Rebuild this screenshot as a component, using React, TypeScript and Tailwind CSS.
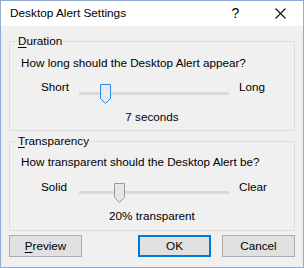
import type { ReactNode } from "react";

const font = { fontFamily: '"Liberation Sans", Arial, sans-serif' };

function Thumb({ focused }: { focused?: boolean }) {
  return (
    <svg width="11" height="20" viewBox="0 0 11 20" className="absolute top-0">
      <path
        d="M0.5 0.5H10.5V14.5L5.5 19.5L0.5 14.5Z"
        fill={focused ? "#eaeaea" : "#e6e6e6"}
        stroke={focused ? "#2a8ae8" : "#9a9a9a"}
      />
    </svg>
  );
}

function SliderRow({
  left,
  right,
  pos,
  focused,
  thumbTop,
}: {
  left: string;
  right: string;
  pos: number;
  focused?: boolean;
  thumbTop: string;
}) {
  return (
    <div className="flex items-start pl-[31px]">
      <span className="w-[38px] leading-[16px]">{left}</span>
      <div className={`relative w-[150px] h-[20px] ${thumbTop}`}>
        <div className="absolute left-0 right-0 top-[8px] h-[3px] bg-[#d9d9d9]" />
        <div className="absolute top-0" style={{ left: pos }}>
          <Thumb focused={focused} />
        </div>
      </div>
      <span className="ml-[10px] leading-[16px]">{right}</span>
    </div>
  );
}

function Group({
  mnemonic,
  rest,
  className,
  children,
}: {
  mnemonic: string;
  rest: string;
  className: string;
  children: ReactNode;
}) {
  return (
    <fieldset className={`border border-[#dcdcdc] mx-[8px] p-0 ${className}`}>
      <legend className="ml-[7px] px-[1px] leading-[16px]">
        <span className="underline underline-offset-2">{mnemonic}</span>
        {rest}
      </legend>
      {children}
    </fieldset>
  );
}

function Button({
  children,
  primary,
}: {
  children: ReactNode;
  primary?: boolean;
}) {
  return (
    <button
      className={`w-[73px] h-[22px] bg-[#e1e1e1] leading-[16px] ${
        primary ? "border-2 border-[#0078d7]" : "border border-[#adadad]"
      }`}
    >
      {children}
    </button>
  );
}

export default function App() {
  return (
    <div
      className="w-[304px] h-[268px] border border-[#92abd4] bg-[#f0f0f0] flex flex-col text-[11.7px] text-black"
      style={font}
    >
      <div className="h-[25px] shrink-0 bg-white flex items-center">
        <span className="ml-[9px] flex-1 text-[11.8px]">Desktop Alert Settings</span>
        <span className="w-[46px] h-full flex items-center justify-center text-[14px] pl-[3px]">?</span>
        <span className="w-[46px] h-full flex items-center justify-center">
          <svg width="11" height="11" viewBox="0 0 11 11">
            <path d="M0.5 0.5L10.5 10.5M10.5 0.5L0.5 10.5" stroke="#111" strokeWidth="1.1" />
          </svg>
        </span>
      </div>

      <Group mnemonic="D" rest="uration" className="mt-[7px]">
        <div className="pl-[11px] mt-[6px] leading-[16px]">How long should the Desktop Alert appear?</div>
        <div className="mt-[8px]">
          <SliderRow left="Short" right="Long" pos={21} focused thumbTop="mt-[5px]" />
        </div>
        <div className="mt-[5px] mb-[5px] text-center leading-[16px]">7 seconds</div>
      </Group>

      <Group mnemonic="T" rest="ransparency" className="mt-[2px]">
        <div className="pl-[11px] mt-[5px] leading-[16px]">How transparent should the Desktop Alert be?</div>
        <div className="mt-[9px]">
          <SliderRow left="Solid" right="Clear" pos={35} thumbTop="mt-[4px]" />
        </div>
        <div className="mt-[5px] mb-[6px] text-center leading-[16px]">20% transparent</div>
      </Group>

      <div className="mt-[4px] px-[8px] flex">
        <Button>
          <span className="underline underline-offset-2">P</span>review
        </Button>
        <div className="ml-auto flex gap-[11px]">
          <Button primary>OK</Button>
          <Button>Cancel</Button>
        </div>
      </div>
    </div>
  );
}
